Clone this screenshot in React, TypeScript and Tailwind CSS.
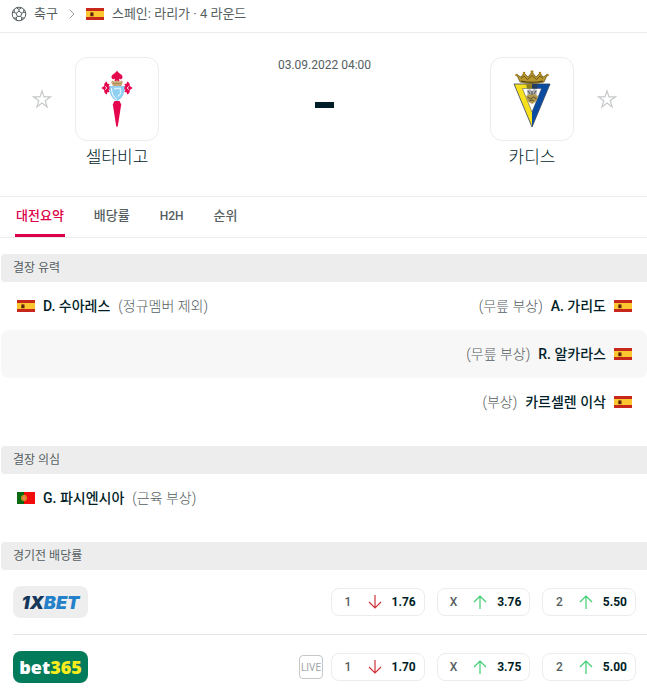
import type { ReactNode } from "react";
import { ChevronRight } from "lucide-react";

type Country = "es" | "pt";

type Absence = {
  name: string;
  reason: string;
  country: Country;
};

type Odd = {
  label: string;
  value: string;
  up: boolean;
};

const likelyOut: { home?: Absence; away?: Absence }[] = [
  {
    home: { name: "D. 수아레스", reason: "(정규멤버 제외)", country: "es" },
    away: { name: "A. 가리도", reason: "(무릎 부상)", country: "es" },
  },
  { away: { name: "R. 알카라스", reason: "(무릎 부상)", country: "es" } },
  { away: { name: "카르셀렌 이삭", reason: "(부상)", country: "es" } },
];

const doubtful: { home?: Absence; away?: Absence }[] = [
  { home: { name: "G. 파시엔시아", reason: "(근육 부상)", country: "pt" } },
];

const xbetOdds: Odd[] = [
  { label: "1", value: "1.76", up: false },
  { label: "X", value: "3.76", up: true },
  { label: "2", value: "5.50", up: true },
];

const bet365Odds: Odd[] = [
  { label: "1", value: "1.70", up: false },
  { label: "X", value: "3.75", up: true },
  { label: "2", value: "5.00", up: true },
];

const tabs = ["대전요약", "배당률", "H2H", "순위"];

function Flag({ country }: { country: Country }) {
  if (country === "pt") {
    return (
      <svg viewBox="0 0 18 12" className="h-3 w-[18px] shrink-0">
        <rect width="18" height="12" fill="#f20d0d" />
        <rect width="7" height="12" fill="#0b6b12" />
        <circle cx="7" cy="6" r="2.9" fill="#d9a520" />
        <circle cx="7" cy="6" r="1.7" fill="#e8442c" />
        <circle cx="7" cy="6" r="0.8" fill="#f3e3cf" />
      </svg>
    );
  }
  return (
    <svg viewBox="0 0 18 12" className="h-3 w-[18px] shrink-0">
      <rect width="18" height="12" fill="#c8281c" />
      <rect y="3" width="18" height="6" fill="#fcc630" />
      <path d="M4.200 4.600h1l.6-.8.8.8h1v3.600H4.200z" fill="#7d3a10" />
      <path d="M5 5.600h1.600v2H5z" fill="#3b1c10" />
    </svg>
  );
}

function BallIcon() {
  return (
    <svg viewBox="0 0 16 16" className="size-4 shrink-0" fill="none" stroke="#555e61" strokeWidth="1">
      <circle cx="8" cy="8" r="6.8" />
      <path d="M8 5.2l2.8 2-1.1 3.2H6.3L5.2 7.2z" />
      <path d="M8 5.2V3.4M10.8 7.2l1.8-.7M9.7 10.4l1.2 1.6M6.3 10.4L5.1 12M5.2 7.2l-1.8-.7" />
      <path d="M5.4 1.9L8 3.4l2.6-1.5M14.6 6l-2 .5.3-3M13.5 12l-2.6 0-.6 2.4M5.7 14.4L5.1 12H2.5M1.4 6l2 .5-.3-3" />
    </svg>
  );
}

function Star({ team }: { team: string }) {
  return (
    <button aria-label={team} className="mt-8 size-5 shrink-0">
      <svg viewBox="0 0 20 20" className="size-5" fill="none" stroke="#c4c8c9" strokeWidth="1.2">
        <path d="M10 1.9l2 6h6.3l-5.1 3.8 1.9 6.2-5.1-3.8-5.1 3.8 1.9-6.2L1.7 7.9H8z" />
      </svg>
    </button>
  );
}

function CeltaCrest() {
  return (
    <svg viewBox="0 0 32 58" className="h-[58px] w-8">
      <g fill="#e4074e">
        <path d="M16 .5c1 2 2 2.400 3.400 3.400 1.600 1 2.600 2.400 1.900 4-.6 1.400-2.300 1.600-3.400.6L18.500 11h-5l.6-2.500c-1.100 1-2.800.8-3.400-.6-.7-1.600.3-3 1.900-4C14 2.900 15 2.500 16 .5z" />
        <path d="M.3 18l3-2c-.2-1-.1-2.400 1-3.500l1.500-1 .6 2.300 2.300.3-1.200 2.200 3 .2v3l-3 .2 1.200 2.200-2.300.3-.6 2.300-1.500-1c-1.100-1.100-1.200-2.500-1-3.500z" />
        <path d="M31.700 18l-3-2c.2-1 .1-2.400-1-3.500l-1.500-1-.6 2.300-2.300.3 1.200 2.200-3 .2v3l3 .2-1.200 2.200 2.300.3.6 2.300 1.500-1c1.100-1.100 1.200-2.500 1-3.500z" />
        <path d="M13.500 31h5l1.700 3.500-3.300 21L16 57.500l-.9-2-3.300-21z" />
      </g>
      <path d="M4 16.300L6 18l-2 1.700M28 16.300L26 18l2 1.700" fill="none" stroke="#fff" strokeWidth=".8" />
      <path d="M11 10.500l2.300 1 2.700-1.300 2.700 1.300 2.300-1 .8 2-1.300 3.500h-8.400L10.200 12.500z" fill="#c9a775" />
      <path d="M12.500 13.500h7" stroke="#8e6d48" strokeWidth=".8" strokeDasharray="1.200 .8" />
      <path d="M8.600 16h14.800c.6 6-1 12-7.400 15-6.400-3-8-9-7.400-15z" fill="#8fd0f2" />
      <path d="M10.500 18c0 5 1.700 9 5.500 11.500" fill="none" stroke="#fff" strokeWidth="1" />
      <path d="M13 18.500h6.500v5.500l-3 2.500" fill="none" stroke="#d6effb" strokeWidth="1.300" />
    </svg>
  );
}

function CadizCrest() {
  return (
    <svg viewBox="0 0 38 58" className="h-[58px] w-[38px]">
      <path d="M1 14h36L19 57z" fill="#fff" />
      <path d="M1 14h18v4.500H9.500L19 42v15z" fill="#f7e11e" />
      <path d="M37 14H19v4.500h9.500L19 42v15z" fill="#0b4ca3" />
      <path d="M1 14h36L19 57z" fill="none" stroke="#32415a" strokeWidth=".8" />
      <path d="M9.500 18.500h19L19 42z" fill="none" stroke="#3a4254" strokeWidth=".5" />
      <path d="M7 12L3.500 4.500l4.500 2.500L11 3l4 4 4-5 4 5 4-4 3 4 4.500-2.500L31 12c-8 2-16 2-24 0z" fill="#b8982c" stroke="#4b3a12" strokeWidth=".6" />
      <path d="M8 11c7 1.700 15 1.700 22 0" fill="none" stroke="#4d3c12" strokeWidth="1" />
      <path d="M8 8.500l3-2.500 3.500 3.500L19 5.500l4.500 4L27 6l3 2.500" fill="none" stroke="#5d4815" strokeWidth=".8" />
      <g fill="#a8861f">
        <circle cx="3.500" cy="5" r="1.300" />
        <circle cx="11" cy="3" r="1.300" />
        <circle cx="19" cy="1.800" r="1.500" />
        <circle cx="27" cy="3" r="1.300" />
        <circle cx="34.500" cy="5" r="1.300" />
      </g>
      <path d="M13 14.500h6v4h-5z" fill="#8a7d22" />
      <path d="M19 14.500h6l-1 4h-5z" fill="#263c5c" />
      <path d="M14 20l3-1 2 2 2-2 3 1-.5 5h-9z" fill="#a9adb5" />
      <path d="M13 26l3-1.500h6l3 1.500-1.500 5-4.500 3-4.500-3z" fill="#b29a4a" />
      <path d="M15 21l2 3M23 21l-2 3M19 21v4M14.500 27l3 2 3-2 3 2M16 31l3-1 2 1" fill="none" stroke="#4d4630" strokeWidth=".9" />
    </svg>
  );
}

function Team({ name, children }: { name: string; children: ReactNode }) {
  return (
    <div className="flex w-[84px] flex-col items-center">
      <a
        href="#"
        aria-label={name}
        className="flex size-[84px] items-center justify-center rounded-xl border border-[#ebeded]"
      >
        {children}
      </a>
      <a href="#" className="mt-1 text-[17px] leading-6 font-light whitespace-nowrap">
        {name}
      </a>
    </div>
  );
}

function SectionTitle({ children }: { children: ReactNode }) {
  return (
    <h2 className="ml-px rounded-l bg-[#ededed] px-3 text-xs leading-7 text-[#555e61]">{children}</h2>
  );
}

function AbsenceRow({ home, away, shaded }: { home?: Absence; away?: Absence; shaded: boolean }) {
  return (
    <div
      className={`ml-px flex h-12 items-center justify-between rounded-lg pr-[15px] pl-4 text-sm ${
        shaded ? "bg-[#f7f7f7]" : ""
      }`}
    >
      {home ? (
        <div className="flex items-center gap-2">
          <Flag country={home.country} />
          <a href="#" className="font-medium">{home.name}</a>
          <span className="font-light text-[#555e61]">{home.reason}</span>
        </div>
      ) : (
        <span />
      )}
      {away && (
        <div className="flex items-center gap-2">
          <span className="font-light text-[#555e61]">{away.reason}</span>
          <a href="#" className="font-medium">{away.name}</a>
          <Flag country={away.country} />
        </div>
      )}
    </div>
  );
}

function Arrow({ up }: { up: boolean }) {
  return (
    <svg
      viewBox="0 0 14 14"
      className="size-[14px]"
      fill="none"
      stroke={up ? "#3fce72" : "#cf3439"}
      strokeWidth="1.2"
    >
      {up ? <path d="M7 14V1M1 7l6-6 6 6" /> : <path d="M7 0v13M1 7l6 6 6-6" />}
    </svg>
  );
}

function OddsRow({ logo, odds, live }: { logo: ReactNode; odds: Odd[]; live?: boolean }) {
  return (
    <div className="mr-[11px] ml-[13px] flex h-16 items-center justify-between">
      {logo}
      <div className="flex items-center gap-2">
        {live && (
          <span className="flex size-6 items-center justify-center rounded border border-[#c4c8c9] text-[10px] text-[#a0a5a7]">
            LIVE
          </span>
        )}
        <div className="grid w-[305px] grid-cols-3 gap-3">
          {odds.map((odd) => (
            <button
              key={odd.label}
              className="flex h-7 items-center justify-between rounded-lg border border-[#ebeded] pr-2 pl-3 text-xs font-bold"
            >
              <span className="w-2 text-center font-medium text-[#555e61]">{odd.label}</span>
              <span className="flex items-center gap-2">
                <Arrow up={odd.up} />
                <span className="w-[26px] text-right">{odd.value}</span>
              </span>
            </button>
          ))}
        </div>
      </div>
    </div>
  );
}

export default function App() {
  return (
    <main className="min-h-screen bg-white pb-2 font-['Roboto','Noto_Sans_CJK_KR',sans-serif] text-[#001e28]">
      <nav className="flex h-[33px] items-center border-b border-[#ebeded] pb-1 pl-[11px] text-[13px] text-[#555e61]">
        <BallIcon />
        <a href="#" className="ml-[7px]">축구</a>
        <ChevronRight className="mx-[6px] size-4 text-[#9aa0a2]" strokeWidth={1.5} />
        <Flag country="es" />
        <a href="#" className="ml-2">스페인: 라리가 · 4 라운드</a>
      </nav>

      <header className="flex justify-between border-b border-[#ebeded] pt-6 pr-[30px] pb-[27px] pl-8">
        <div className="flex gap-[23px]">
          <Star team="셀타비고 즐겨찾기" />
          <Team name="셀타비고">
            <CeltaCrest />
          </Team>
        </div>
        <div className="flex flex-col items-center">
          <time className="text-xs leading-4 text-[#555e61]">03.09.2022 04:00</time>
          <span className="mt-[29px] h-[6px] w-[19px] bg-[#001e28]" />
        </div>
        <div className="flex gap-[23px]">
          <Team name="카디스">
            <CadizCrest />
          </Team>
          <Star team="카디스 즐겨찾기" />
        </div>
      </header>

      <div className="mb-4 flex h-[41px] gap-7 border-b border-[#ebeded] pl-[15px] text-[13px]">
        {tabs.map((tab, i) => (
          <button
            key={tab}
            className={`h-10 border-b-3 px-px pt-px font-medium ${
              i === 0 ? "border-[#dc0048] text-[#dc0048]" : "border-transparent text-[#555e61]"
            } ${tab === "H2H" ? "text-xs" : ""}`}
          >
            {tab}
          </button>
        ))}
      </div>

      <section className="mb-5">
        <SectionTitle>결장 유력</SectionTitle>
        {likelyOut.map((row, i) => (
          <AbsenceRow key={i} {...row} shaded={i % 2 === 1} />
        ))}
      </section>

      <section className="mb-5">
        <SectionTitle>결장 의심</SectionTitle>
        {doubtful.map((row, i) => (
          <AbsenceRow key={i} {...row} shaded={i % 2 === 1} />
        ))}
      </section>

      <section>
        <SectionTitle>경기전 배당률</SectionTitle>
        <OddsRow
          odds={xbetOdds}
          logo={
            <a
              href="#"
              className="flex h-8 w-[75px] items-center justify-center rounded-lg bg-[#eeeeee] font-['Inter'] text-[18px] font-black text-[#15375b] italic"
            >
              1X<span className="text-[#2380c9]">BET</span>
            </a>
          }
        />
        <hr className="ml-[13px] border-[#e3e5e5]" />
        <OddsRow
          live
          odds={bet365Odds}
          logo={
            <a
              href="#"
              className="flex h-8 w-[75px] items-center justify-center rounded-lg bg-[#027b5b] font-['Open_Sans'] text-[18px] font-extrabold text-white"
            >
              bet<span className="text-[#f9ec1c]">365</span>
            </a>
          }
        />
      </section>
    </main>
  );
}
